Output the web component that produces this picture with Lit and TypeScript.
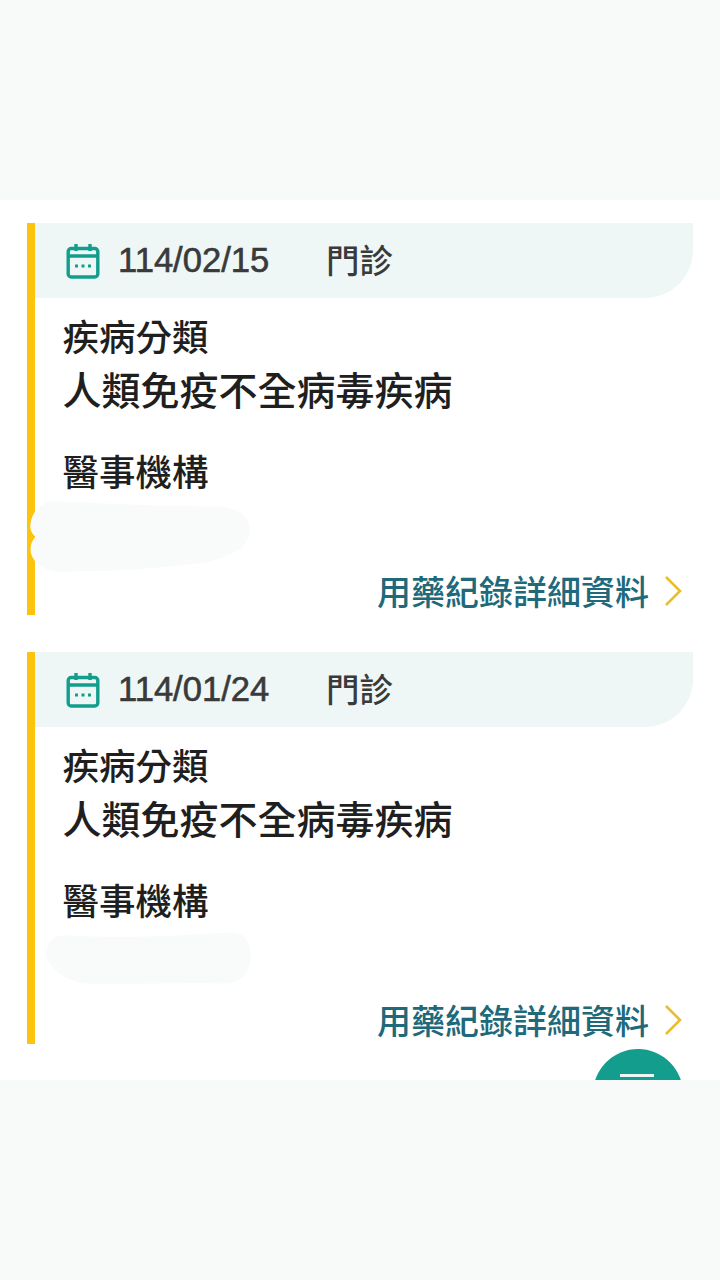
import { LitElement, html, css, svg } from "lit";
import { customElement } from "lit/decorators.js";

const records = [
  {
    date: "114/02/15",
    blob: svg`<path class="smudge" d="M24 1C60 2 120 6 185 6C206 6 220 16 220 30C220 48 198 60 165 64C120 70 70 72 30 72C14 72 2 62 1 50C1 44 3 40 6 37C2 33 0 29 1 24C2 14 10 1 24 1Z" />`,
    blobClass: "blob first",
    box: "0 0 221 73",
  },
  {
    date: "114/01/24",
    blob: svg`<path class="smudge" d="M22 4C70 7 130 5 185 1C200 0 206 12 206 24C206 40 198 52 180 53C130 52 90 54 40 53C20 50 1 36 1 22C1 12 8 3 22 4Z" />`,
    blobClass: "blob second",
    box: "0 0 207 55",
  },
];

@customElement("app-root")
class AppRoot extends LitElement {
  static styles = [
    css`
      :host {
        display: block;
        height: 1280px;
        overflow: hidden;
        background: #f7faf9;
        font-family: "Noto Sans CJK TC", "Noto Sans", sans-serif;
      }

      .content {
        position: relative;
        overflow: hidden;
        box-sizing: border-box;
        height: 880px;
        margin-top: 200px;
        padding: 23px 27px 0;
        display: flex;
        flex-direction: column;
        gap: 37px;
        background: white;
      }

      .record {
        position: relative;
        box-sizing: border-box;
        height: 392px;
        flex: none;
        display: flex;
        flex-direction: column;
        border-left: 8px solid #fcc30f;
      }

      .record-head {
        height: 75px;
        flex: none;
        display: flex;
        align-items: center;
        padding-left: 31px;
        background: #eef7f6;
        border-bottom-right-radius: 48px;
        color: #3a3a3a;
      }

      .record-head svg {
        width: 34px;
        height: 36px;
        flex: none;
      }

      .date {
        width: 208px;
        margin-left: 18px;
        font-family: "Liberation Sans", sans-serif;
        font-size: 34.6px;
        font-weight: 500;
        -webkit-text-stroke: 0.6px #3a3a3a;
      }

      .kind {
        font-size: 33.5px;
        font-weight: 500;
        line-height: 40px;
        margin-top: -4px;
      }

      .record-body {
        flex: 1;
        display: flex;
        flex-direction: column;
        padding: 11px 10px 0 27.5px;
        color: #1f1f1f;
        font-weight: 500;
      }

      .label {
        font-size: 36.5px;
        line-height: 54px;
      }

      .value {
        font-size: 39px;
        line-height: 50px;
      }

      .label.org {
        margin-top: 31px;
      }

      .detail {
        margin-top: auto;
        margin-bottom: 2px;
        height: 46px;
        display: flex;
        align-items: center;
        justify-content: flex-end;
        gap: 14px;
        font-size: 34px;
        color: #20697b;
      }

      .detail svg {
        width: 20px;
        height: 32px;
        flex: none;
        margin-bottom: -2px;
      }

      .blob {
        position: absolute;
        overflow: visible;
      }

      .blob.first {
        left: -5px;
        top: 277px;
        width: 221px;
        height: 73px;
      }

      .blob.second {
        left: 10px;
        top: 279px;
        width: 207px;
        height: 55px;
      }

      .smudge {
        fill: #f9fafa;
        stroke: white;
        stroke-width: 1;
      }

      .fab {
        position: absolute;
        left: 593px;
        top: 849px;
        width: 90px;
        height: 90px;
        border-radius: 50%;
        background: #139d8c;
      }

      .fab::after {
        content: "";
        position: absolute;
        left: 27px;
        top: 25px;
        width: 34px;
        height: 3px;
        background: #eef7f6;
      }
    `,
  ];

  render() {
    return html`
      <div class="content">
        ${records.map(
          (r) => html`
            <section class="record">
              <div class="record-head">
                <svg viewBox="0 0 34 36" fill="none" stroke="#139d8c" stroke-width="3.4">
                  <rect x="2.2" y="5.5" width="29.6" height="28.5" rx="3" />
                  <path d="M2.2 13H31.8M10 1V8M24 1V8" />
                  <path d="M9 23h3M15.5 23h3M22 23h3" stroke-width="2.8" />
                </svg>
                <span class="date">${r.date}</span>
                <span class="kind">門診</span>
              </div>
              <div class="record-body">
                <div class="label">疾病分類</div>
                <div class="value">人類免疫不全病毒疾病</div>
                <div class="label org">醫事機構</div>
                <div class="detail">
                  <span>用藥紀錄詳細資料</span>
                  <svg viewBox="0 0 20 32" fill="none" stroke="#e9bd2f" stroke-width="2.6">
                    <path d="M3 2L17 16L3 30" />
                  </svg>
                </div>
              </div>
              <svg class=${r.blobClass} viewBox=${r.box}>${r.blob}</svg>
            </section>
          `,
        )}
        <div class="fab"></div>
      </div>
    `;
  }
}

export default AppRoot;
